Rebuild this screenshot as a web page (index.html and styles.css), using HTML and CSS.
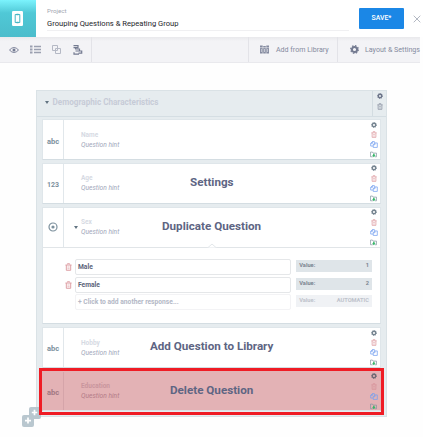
FILE: index.html
```html
<!DOCTYPE html>
<html lang="en">
<head>
<meta charset="utf-8">
<title>Form builder</title>
<link rel="stylesheet" href="styles.css">
</head>
<body>
<svg class="defs" aria-hidden="true">
  <symbol id="gear" viewBox="0 0 16 16"><circle cx="8" cy="8" r="4.600" fill="none" stroke="currentColor" stroke-width="3.600"/><circle cx="8" cy="8" r="6.800" fill="none" stroke="currentColor" stroke-width="2.200" stroke-dasharray="2.700 2.640"/></symbol>
  <symbol id="trash" viewBox="0 0 16 18"><path d="M5.500 3V1.500h5V3M1 4.500h14M3 4.500v12h10v-12" fill="none" stroke="currentColor" stroke-width="2.200"/><path d="M5.500 9h5M5.500 13h5" stroke="currentColor" stroke-width="1.600"/></symbol>
  <symbol id="copy" viewBox="0 0 20 18"><path d="M8 13H1.500V6L6 1.500h5V5M1.500 6H6V1.500M8 9.500L12 5h6.500v11.500H8zM8 9.500h4.500V5" fill="none" stroke="currentColor" stroke-width="1.900"/></symbol>
  <symbol id="folder" viewBox="0 0 20 18"><path d="M8 15.500H1.500V2H7l2 3h9.500v10.500H14" fill="none" stroke="#84949f" stroke-width="2"/><path d="M9 7h4v4h3l-5 6-5-6h3z" fill="#2fb463"/></symbol>
</svg>

<header class="top">
  <div class="brand"><svg viewBox="0 0 11 15"><rect width="11" height="15" rx="1.200" fill="#fff"/><path d="M3.200 3.500h4.600v8H3.200z" fill="none" stroke="#45b5c4" stroke-width="1"/><path d="M4.500 3.500h2M4.500 11.500h2" stroke="#45b5c4" stroke-width="1.500"/></svg></div>
  <div class="title">
    <span class="label">Project</span>
    <span class="name">Grouping Questions &amp; Repeating Group</span>
  </div>
  <button class="save">SAVE*</button>
  <svg class="close" viewBox="0 0 8 8"><path d="M.7.7l6.600 6.600M7.300.7L.7 7.300" stroke="#b3b8c2" fill="none"/></svg>
</header>

<nav class="toolbar">
  <div class="tools">
    <svg class="eye" viewBox="0 0 20 12"><path d="M1 6Q10-4 19 6Q10 16 1 6z" fill="none" stroke="currentColor" stroke-width="1.800"/><circle cx="10" cy="6" r="3" fill="currentColor"/></svg>
    <svg class="list" viewBox="0 0 11 9"><path d="M0 1.500h2.500M0 4.500h2.500M0 7.500h2.500" stroke="currentColor" stroke-width="2"/><path d="M4 1.500h7M4 4.500h7M4 7.500h7" stroke="currentColor" stroke-width="1.300"/></svg>
    <svg class="dup" viewBox="0 0 9 9"><path d="M.5.5h5v5h-5zM3.500 3.500h5v5h-5z" fill="none" stroke="currentColor"/></svg>
    <svg class="tree" viewBox="0 0 10 10"><path d="M.5.600h4.500v2H.5M2.500 2.600v1.400M2 4h4.500v2H2.500M4.500 6M1 7.200v1.900h5M4.500 6h4.200v2.200H5.500" fill="none" stroke="currentColor" stroke-width="1.200"/></svg>
  </div>
  <div class="tool lib">
    <svg viewBox="0 0 9 9"><path d="M0 .5h2.700v8H0zM3.200 1h2.600v7.500H3.200zM6.300.5H9v8H6.300z" fill="currentColor"/><path d="M0 2.700h9M1.400 4v3M4.500 4v3M7.600 4v3" stroke="#f3f3f6" stroke-width=".6"/></svg>
    <span>Add from Library</span>
  </div>
  <div class="tool layout"><svg><use href="#gear"/></svg><span>Layout &amp; Settings</span></div>
</nav>

<main class="group">
  <div class="group-head">
    <i class="caret"></i><h2>Demographic Characteristics</h2>
    <div class="group-actions"><svg class="gear"><use href="#gear"/></svg><svg class="bin"><use href="#trash"/></svg></div>
  </div>
  <svg class="plus" viewBox="0 0 19 21"><rect x="7" width="12" height="12" rx="2" fill="#b9c7cf"/><path d="M12.500 2.800v5.400M9.800 5.500h5.400" stroke="#fff" stroke-width="1.700"/><rect y="8" width="12" height="12" rx="2" fill="#b9c7cf"/><path d="M6 10.600v6M3 13.600h6" stroke="#fff" stroke-width="1.700"/></svg>
  <div class="rows">
    <section class="row">
      <div class="card">
        <div class="type">abc</div><div class="text"><b>Name</b><em>Question hint</em></div>
        <div class="actions"><svg class="gear"><use href="#gear"/></svg><svg class="del"><use href="#trash"/></svg><svg class="cp"><use href="#copy"/></svg><svg class="fold"><use href="#folder"/></svg></div>
      </div>
    </section>
    <section class="row">
      <div class="card">
        <div class="type num">123</div><div class="text"><b>Age</b><em>Question hint</em></div><span class="note settings">Settings</span>
        <div class="actions"><svg class="gear"><use href="#gear"/></svg><svg class="del"><use href="#trash"/></svg><svg class="cp"><use href="#copy"/></svg><svg class="fold"><use href="#folder"/></svg></div>
      </div>
    </section>
    <section class="row open">
      <div class="card">
        <div class="type"><svg class="radio" viewBox="0 0 10 10"><circle cx="5" cy="5" r="4" fill="none" stroke="currentColor" stroke-width="1.200"/><circle cx="5" cy="5" r="1.600" fill="currentColor"/></svg></div>
        <div class="text"><i class="caret"></i><b>Sex</b><em>Question hint</em></div><span class="note duplicate">Duplicate Question</span>
        <div class="actions"><svg class="gear"><use href="#gear"/></svg><svg class="del"><use href="#trash"/></svg><svg class="cp"><use href="#copy"/></svg><svg class="fold"><use href="#folder"/></svg></div>
        <svg class="notch" viewBox="0 0 10 5"><path d="M0 5l1-.5L5 1l4 3.500 1 .5z" fill="#fff" stroke="#e3e7ea"/></svg>
      </div>
      <div class="options">
        <div class="option"><svg class="remove"><use href="#trash"/></svg><div class="field">Male</div><div class="value"><span>Value:</span><span>1</span></div></div>
        <div class="option"><svg class="remove"><use href="#trash"/></svg><div class="field">Female</div><div class="value"><span>Value:</span><span>2</span></div></div>
        <div class="option add"><i class="remove"></i><div class="field">+ Click to add another response...</div><div class="value"><span>Value:</span><span>AUTOMATIC</span></div></div>
      </div>
    </section>
    <section class="row">
      <div class="card">
        <div class="type">abc</div><div class="text"><b>Hobby</b><em>Question hint</em></div><span class="note library">Add Question to Library</span>
        <div class="actions"><svg class="gear"><use href="#gear"/></svg><svg class="del"><use href="#trash"/></svg><svg class="cp"><use href="#copy"/></svg><svg class="fold"><use href="#folder"/></svg></div>
      </div>
    </section>
    <section class="row danger">
      <div class="card">
        <div class="type">abc</div><div class="text"><b>Education</b><em>Question hint</em></div><span class="note delete">Delete Question</span>
        <div class="actions"><svg class="gear"><use href="#gear"/></svg><svg class="del"><use href="#trash"/></svg><svg class="cp"><use href="#copy"/></svg><svg class="fold"><use href="#folder"/></svg></div>
      </div>
      <div class="frame"></div>
    </section>
  </div>
</main>
</body>
</html>
```

FILE: styles.css
```css
* { box-sizing: border-box; }
body { margin: 0; width: 423px; height: 437px; overflow: hidden; background: #fefefe; font-family: Roboto, sans-serif; color: #5f6680; }
svg { display: block; flex: none; }
.defs { position: absolute; width: 0; height: 0; }

.top { display: flex; height: 37px; background: #fff; }
.brand { width: 36px; height: 37px; display: grid; place-items: center; background: linear-gradient(#7bf3fd, #50c8d6 35%, #4bbccb); }
.brand svg { width: 11px; height: 15px; margin-right: 1px; }
.title { width: 302px; height: 31px; margin-left: 11px; border-bottom: 1px solid #f0f0f2; display: flex; flex-direction: column; }
.label { font-size: 6.200px; line-height: 8px; margin-top: 7px; color: #a3a7b2; }
.name { font-size: 7.600px; line-height: 10px; margin-top: 4px; color: #25262b; white-space: nowrap; }
.save { width: 45px; height: 21px; margin: 8px 0 0 10px; padding: 0; border: 0; border-radius: 1px; background: #1b87e6; color: #fff; font: 500 6.900px/19px Roboto, sans-serif; }
.close { width: 8px; height: 8px; margin: 14.500px 0 0 9px; }

.toolbar { display: flex; width: 420px; height: 26px; background: linear-gradient(#e9e9ec, #f3f3f6 4px); border-bottom: 1px solid #e9e9ed; color: #858ba0; }
.tools { width: 93px; display: flex; align-items: center; border-right: 1px solid #e3e3e8; padding-left: 9px; }
.eye { width: 10px; height: 6px; color: #747b93; }
.list { width: 11px; height: 9px; margin-left: 11px; color: #9ba0b0; }
.dup { width: 9px; height: 9px; margin-left: 11px; color: #b5b9c5; }
.tree { width: 10px; height: 10px; margin-left: 12px; color: #747b91; }
.tool { display: flex; align-items: center; border-left: 1px solid #e3e3e8; font-size: 7.100px; white-space: nowrap; }
.lib { width: 89px; margin-left: 156px; padding-left: 11px; }
.lib svg { width: 9px; height: 9px; margin-right: 6.500px; }
.layout { padding-left: 12px; }
.layout svg { width: 9px; height: 9px; margin-right: 6px; color: #747b91; }

.group { position: relative; width: 351px; height: 327px; margin: 27px 0 0 36px; background: #e6ecef; border: 1px solid #dae2e6; }
.group-head { display: flex; align-items: center; height: 26px; border-bottom: 1px solid #d5dee3; }
.caret { width: 0; height: 0; border: 2.500px solid transparent; border-top: 3px solid #627482; border-bottom: 0; }
.group-head .caret { margin-left: 8px; margin-bottom: 2px; }
h2 { margin: 0 0 3px 3.500px; flex: 1; font-size: 8.150px; font-weight: 700; color: #c6cbd7; }
.group-actions { width: 14px; align-self: stretch; border-left: 1px solid #d3dce1; display: flex; flex-direction: column; align-items: center; gap: 4px; padding-top: 2px; color: #6b7389; }
.gear { width: 6px; height: 6px; }
.bin { width: 6px; height: 7px; color: #8f97a6; }

.rows { display: flex; flex-direction: column; gap: 3px; padding: 2.300px 5px 0; }
.row { position: relative; height: 40.650px; background: #fff; border: 1px solid #dfe6ea; border-bottom-color: #d4dde2; }
.card { position: relative; display: flex; height: 38.600px; }
.type { width: 21px; border-right: 1px solid #e1e7eb; display: grid; place-items: center; padding-top: 3px; font-size: 7.500px; font-weight: 700; color: #7c909d; }
.num { font-size: 7px; }
.radio { width: 10px; height: 10px; margin-top: -3px; }
.text { position: relative; width: 60px; padding: 9.500px 0 0 17px; white-space: nowrap; }
.text b, .text em { display: block; line-height: 10px; }
.text b { font-size: 6.500px; font-weight: 700; color: #d6dae3; }
.text em { font-size: 6.700px; color: #a2a7ba; }
.text .caret { position: absolute; left: 10px; top: 18px; border-width: 3px 2.500px 0; }
.note { height: 38px; font-size: 11.650px; font-weight: 700; line-height: 37px; white-space: nowrap; color: #5e6583; }
.settings { margin-left: 66px; }
.duplicate { margin-left: 38px; }
.library { margin-left: 26px; }
.delete { margin-left: 46px; }
.actions { margin-left: auto; width: 13px; display: flex; flex-direction: column; align-items: center; padding-top: 1.500px; color: #758490; }
.del { width: 6px; height: 7px; margin-top: 3.500px; color: #e0a2a6; }
.cp { width: 8px; height: 7px; margin-top: 3px; color: #74a0f0; }
.fold { width: 7px; height: 7px; margin-top: 3px; }

.open { height: 117.600px; }
.open .card { height: 40px; border-bottom: 1px solid #e1e5e8; }
.notch { position: absolute; left: 164px; bottom: -1px; width: 10px; height: 5px; }
.options { display: flex; flex-direction: column; gap: 1.700px; padding: 11.500px 8px 0 22px; }
.option { display: flex; height: 16px; font-weight: 700; }
.remove { width: 7px; height: 8px; margin: 4px 3px 0 0; color: #dd9da2; }
.field { width: 217px; height: 16px; border: 1px solid #e5e7e9; border-radius: 2px; padding-left: 2px; font-size: 6.700px; font-weight: 700; line-height: 14px; color: #5d647a; }
.value { width: 76px; height: 12px; margin: 1px 0 0 5px; padding: 0 3px; display: flex; justify-content: space-between; background: #dfe5e9; font-size: 5.700px; font-weight: 700; line-height: 11px; color: #7b8490; }
.add .field { color: #b3b8c6; border-color: #f3f3f5; }
.add .value { background: #f0f2f5; color: #bec2cb; }

.danger { background: #e3b2b5; border-color: #e3b2b5; border-bottom-color: #dbe1e5; }
.danger .type { color: #a17681; border-color: #d5a4a9; }
.danger .text b { color: #c9959d; }
.danger .text em { color: #b47c88; }
.danger .del { color: #d8959b; }
.danger .actions { color: #6e6974; }
.frame { position: absolute; inset: -4px -4px -5px; border: 3px solid #ef1c25; }
.plus { position: absolute; left: -15px; top: 316px; width: 19px; height: 21px; }
```
